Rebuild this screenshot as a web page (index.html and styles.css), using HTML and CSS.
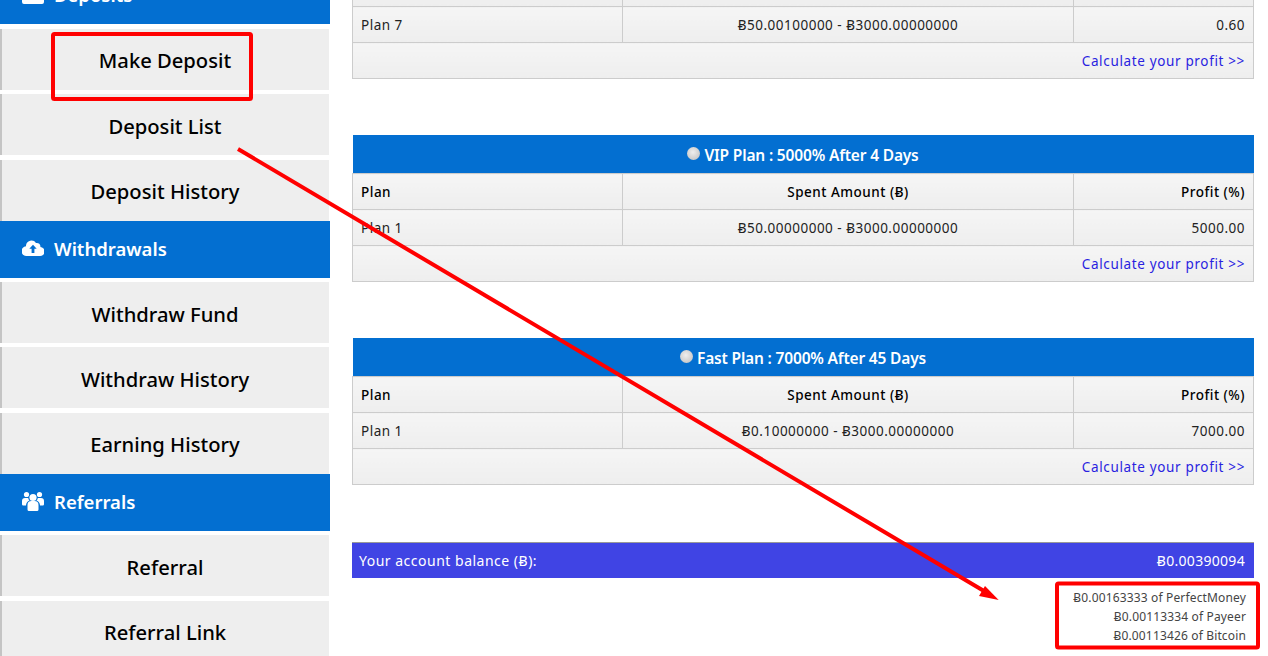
FILE: index.html
```html
<!DOCTYPE html>
<html lang="en">
<head>
<meta charset="utf-8">
<title>Deposit plans</title>
<link rel="stylesheet" href="styles.css">
</head>
<body>
<div class="page">
  <nav class="sidebar">
    <a class="nav-head"><svg class="nav-icon" viewBox="0 0 22 18"><path fill="#fff" d="M1 4h6l2 2h11a2 2 0 0 1 2 2v8a2 2 0 0 1-2 2H2a2 2 0 0 1-2-2V5a1 1 0 0 1 1-1z"/></svg>Deposits</a>
    <a class="nav-item">Make Deposit</a>
    <a class="nav-item">Deposit List</a>
    <a class="nav-item">Deposit History</a>
    <a class="nav-head"><svg class="nav-icon" viewBox="0 0 22 16"><path fill="#fff" d="M18.4 7A3.6 3.6 0 0 0 14 3 5.5 5.5 0 0 0 4 5.6v.6A4.9 4.9 0 0 0 5 16h12.700a4.300 4.300 0 0 0 .7-9z"/><path fill="#036fd1" d="M11 4.700 7.300 8.700h2.300V13h2.800V8.700h2.300z"/></svg>Withdrawals</a>
    <a class="nav-item">Withdraw Fund</a>
    <a class="nav-item">Withdraw History</a>
    <a class="nav-item">Earning History</a>
    <a class="nav-head"><svg class="nav-icon" viewBox="0 0 22 20"><g fill="#fff"><circle cx="11" cy="6.500" r="3.600"/><circle cx="4.500" cy="3.500" r="2.600"/><circle cx="17.500" cy="3.500" r="2.600"/><path d="M5.500 14a4 4 0 0 1 4-4h3a4 4 0 0 1 4 4v4.500a1.500 1.500 0 0 1-1.500 1.500H7a1.500 1.500 0 0 1-1.500-1.500z"/><path d="M4 14.500H1.200A1.200 1.200 0 0 1 0 13.300V10a3 3 0 0 1 3-3h3.200a5 5 0 0 0 1.300 2.600A5.500 5.500 0 0 0 4 14.500z"/><path d="M18 14.500h2.800a1.200 1.200 0 0 0 1.200-1.200V10a3 3 0 0 0-3-3h-3.200a5 5 0 0 1-1.300 2.600 5.500 5.500 0 0 1 3.500 4.900z"/></g></svg>Referrals</a>
    <a class="nav-item">Referral</a>
    <a class="nav-item">Referral Link</a>
  </nav>
  <main class="content">
    <table class="plan plan-first">
      <colgroup><col class="col-a"><col class="col-b"><col class="col-c"></colgroup>
      <tr class="row-cut"><td></td><td></td><td></td></tr>
      <tr><td>Plan 7</td><td class="mid">Ƀ50.00100000 - Ƀ3000.00000000</td><td class="end">0.60</td></tr>
      <tr><td colspan="3" class="end"><a class="calc">Calculate your profit &gt;&gt;</a></td></tr>
    </table>
    <table class="plan">
      <colgroup><col class="col-a"><col class="col-b"><col class="col-c"></colgroup>
      <tr><th colspan="3" class="title"><span class="dot"></span>VIP Plan : 5000% After 4 Days</th></tr>
      <tr class="head"><td>Plan</td><td class="mid">Spent Amount (Ƀ)</td><td class="end">Profit (%)</td></tr>
      <tr><td>Plan 1</td><td class="mid">Ƀ50.00000000 - Ƀ3000.00000000</td><td class="end">5000.00</td></tr>
      <tr><td colspan="3" class="end"><a class="calc">Calculate your profit &gt;&gt;</a></td></tr>
    </table>
    <table class="plan plan-last">
      <colgroup><col class="col-a"><col class="col-b"><col class="col-c"></colgroup>
      <tr><th colspan="3" class="title"><span class="dot"></span>Fast Plan : 7000% After 45 Days</th></tr>
      <tr class="head"><td>Plan</td><td class="mid">Spent Amount (Ƀ)</td><td class="end">Profit (%)</td></tr>
      <tr><td>Plan 1</td><td class="mid">Ƀ0.10000000 - Ƀ3000.00000000</td><td class="end">7000.00</td></tr>
      <tr><td colspan="3" class="end"><a class="calc">Calculate your profit &gt;&gt;</a></td></tr>
    </table>
    <div class="balance"><span>Your account balance (Ƀ):</span><span class="amount">Ƀ0.00390094</span></div>
    <div class="breakdown">
      <div>Ƀ0.00163333 of PerfectMoney</div>
      <div>Ƀ0.00113334 of Payeer</div>
      <div>Ƀ0.00113426 of Bitcoin</div>
    </div>
  </main>
</div>
<svg class="notes" width="1268" height="656" viewBox="0 0 1268 656">
  <rect x="53" y="34" width="198" height="65" rx="1.500" fill="none" stroke="#f00" stroke-width="4"/>
  <rect x="1057" y="583.500" width="201" height="64" rx="1.500" fill="none" stroke="#f00" stroke-width="4"/>
  <path d="M238 149 984 591" stroke="#f00" stroke-width="4" fill="none"/>
  <path d="M998.700 600 979 596 985 586z" fill="#f00"/>
</svg>
</body>
</html>
```
FILE: styles.css
```css
html, body {
  margin: 0;
  height: 100%;
  overflow: hidden;
  background: #fff;
}
body {
  font-family: "Noto Sans", "Open Sans", sans-serif;
  color: #000;
}
.page {
  display: flex;
  gap: 22px;
  margin-top: -32.600px;
}
.sidebar {
  width: 330px;
  flex: none;
  display: flex;
  flex-direction: column;
}
.nav-head {
  height: 57px;
  box-sizing: border-box;
  padding-bottom: 2px;
  background: #036fd1;
  color: #fff;
  display: flex;
  align-items: center;
  gap: 10px;
  padding-left: 22px;
  font-size: 18.500px;
  font-weight: 600;
}
.nav-icon {
  width: 22px;
  height: 20px;
  flex: none;
}
.nav-item {
  width: 329px;
  height: 60.900px;
  margin-top: 4.500px;
  padding-top: 2px;
  padding-right: 1px;
  box-sizing: border-box;
  background: #eee;
  border-left: 2px solid #c4c4c4;
  display: flex;
  align-items: center;
  justify-content: center;
  font-size: 20.200px;
  font-weight: 500;
}
.nav-item + .nav-head {
  margin-top: 0;
}
.content {
  width: 902px;
  flex: none;
  padding-top: 32.600px;
}
.plan {
  width: 901px;
  table-layout: fixed;
  border-collapse: collapse;
  font-size: 13.500px;
  letter-spacing: 0.500px;
  margin-bottom: 56px;
  color: #222;
}
.plan-first {
  margin-top: -30px;
}
.plan-last {
  margin-bottom: 57px;
}
.col-a { width: 270px; }
.col-b { width: 451px; }
.col-c { width: 180px; }
.plan td {
  height: 35px;
  padding: 0 8px;
  border: 1px solid #ccc;
  background: linear-gradient(#f5f5f5, #eee);
  box-sizing: content-box;
}
.plan .mid { text-align: center; }
.plan .end { text-align: right; }
.plan .head td {
  color: #000;
  font-weight: 500;
}
.plan .title {
  height: 36px;
  padding: 2px 0 0;
  background: #036fd1;
  color: #fff;
  font-size: 15.500px;
  font-weight: 600;
  letter-spacing: -0.170px;
  text-align: center;
}
.dot {
  display: inline-block;
  width: 13px;
  height: 13px;
  margin-right: 4px;
  border-radius: 50%;
  background: radial-gradient(circle at 45% 40%, #eee, #c8c8c8 75%, #aaa);
  vertical-align: 1px;
}
.calc {
  color: #2a1fe0;
  letter-spacing: 0.650px;
}
.balance {
  height: 35px;
  border-top: 1px solid #999;
  background: #4044e4;
  color: #fff;
  display: flex;
  align-items: center;
  justify-content: space-between;
  padding: 0 9px 0 7px;
  font-size: 14px;
  letter-spacing: 0.500px;
}
.amount {
  letter-spacing: 0.300px;
}
.breakdown {
  margin-top: 10px;
  padding-right: 8px;
  text-align: right;
  font-size: 12px;
  line-height: 19px;
  letter-spacing: 0.150px;
  color: #444;
}
.notes {
  position: absolute;
  left: 0;
  top: 0;
  pointer-events: none;
}
```
